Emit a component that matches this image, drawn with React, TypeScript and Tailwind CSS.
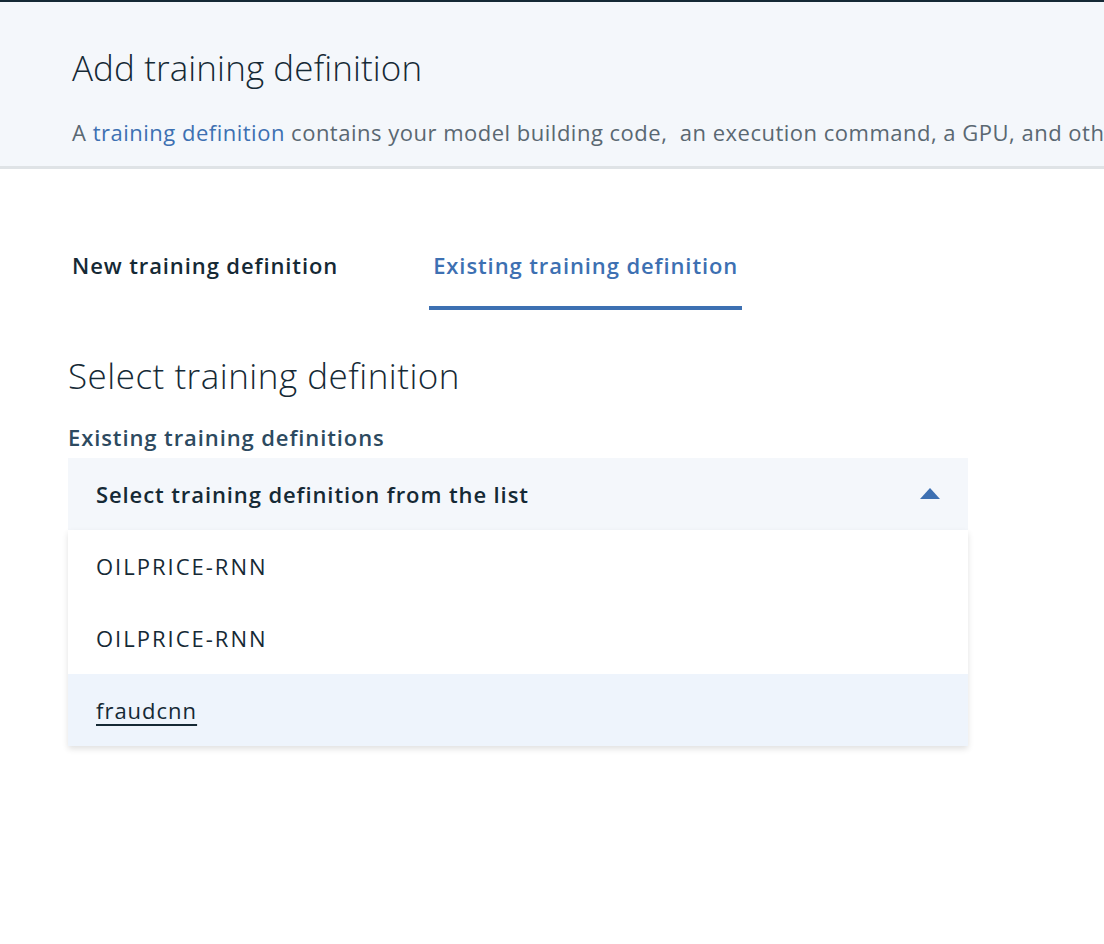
import { useState } from 'react'

const items = ['OILPRICE-RNN', 'OILPRICE-RNN', 'fraudcnn']

export default function App() {
  const [tab, setTab] = useState(1)
  const [hovered, setHovered] = useState(2)

  return (
    <div className="min-h-screen bg-white font-['Open_Sans',sans-serif] text-[#152935] overflow-hidden">
      {/* page header */}
      <div className="border-t-2 border-[#152935] border-b-[3px] border-b-[#dfe3e6] bg-[#f4f7fb] h-[169px] pl-[72px] pt-[44px] whitespace-nowrap overflow-hidden">
        <h1 className="text-[35px] font-light leading-[44px] tracking-[0.1px]">Add training definition</h1>
        <p className="mt-[27px] text-[22px] leading-[30px] tracking-[0.5px] text-[#5a6872]">
          A <span className="text-[#3d70b2]">training definition</span> contains your model building code,&nbsp; an execution command, a GPU, and other settings required to train a model.
        </p>
      </div>

      {/* tabs */}
      <div className="flex pl-[68px] mt-[71px]">
        {['New training definition', 'Existing training definition'].map((t, i) => (
          <button
            key={t}
            onClick={() => setTab(i)}
            className={
              'px-[4px] h-[70px] pt-[10px] text-[22px] font-semibold leading-[30px] tracking-[0.9px] border-b-4 flex items-start whitespace-nowrap ' +
              (i === 0 ? 'mr-[87px] ' : '') +
              (tab === i ? 'text-[#3d70b2] border-[#3d70b2]' : 'text-[#152935] border-transparent')
            }
          >
            {t}
          </button>
        ))}
      </div>

      {/* select */}
      <div className="pl-[68px] mt-[44px] w-[968px]">
        <h2 className="text-[35px] font-light leading-[44px] tracking-[0.5px]">Select training definition</h2>
        <div className="mt-[24px] text-[22px] font-semibold leading-[30px] tracking-[0.9px] text-[#2d4a60]">Existing training definitions</div>
        <div className="mt-[6px] h-[72px] bg-[#f4f7fb] flex items-center justify-between pl-[28px] pr-[28px]">
          <span className="text-[22px] font-semibold tracking-[0.9px]">Select training definition from the list</span>
          <svg width="20" height="11" viewBox="0 0 20 11" className="mb-[2px]">
            <path d="M10 0 L20 11 L0 11 Z" fill="#3d70b2" />
          </svg>
        </div>
        <ul className="bg-white shadow-[0_3px_6px_0_rgba(0,0,0,0.12)]">
          {items.map((it, i) => (
            <li
              key={i}
              onMouseEnter={() => setHovered(i)}
              className={
                'h-[72px] flex items-center pl-[28px] text-[22px] ' +
                (it === 'fraudcnn' ? 'tracking-[1px] ' : 'tracking-[2px] ') +
                (hovered === i ? 'bg-[#eef4fc] underline underline-offset-[5px]' : '')
              }
            >
              {it}
            </li>
          ))}
        </ul>
      </div>
    </div>
  )
}
